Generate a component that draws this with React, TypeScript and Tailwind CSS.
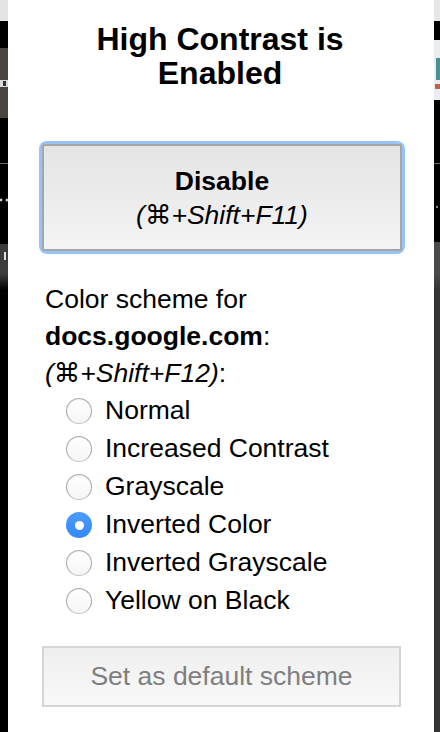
import React from "react";

const radios = [
  { label: "Normal", checked: false },
  { label: "Increased Contrast", checked: false },
  { label: "Grayscale", checked: false },
  { label: "Inverted Color", checked: true },
  { label: "Inverted Grayscale", checked: false },
  { label: "Yellow on Black", checked: false },
];

function LeftStrip() {
  return (
    <svg width="8" height="732" viewBox="0 0 8 732" className="shrink-0 block">
      <defs>
        <linearGradient id="lg1" x1="0" y1="0" x2="0" y2="1">
          <stop offset="0" stopColor="#3c3c3c" />
          <stop offset="1" stopColor="#000000" />
        </linearGradient>
      </defs>
      <rect x="0" y="0" width="8" height="732" fill="#000" />
      <rect x="0" y="0" width="8" height="21" fill="#e4e4e4" />
      <rect x="0" y="48" width="8" height="70" fill="#4a463f" />
      <rect x="0" y="80" width="8" height="7" fill="#d9d9d9" />
      <rect x="3" y="81" width="3" height="5" fill="#333" />
      <rect x="0" y="163" width="8" height="1" fill="#6a6a6a" />
      <circle cx="1" cy="200" r="1.4" fill="#cfcfcf" />
      <circle cx="7" cy="200" r="1.6" fill="#bdbdbd" />
      <rect x="0" y="244" width="8" height="30" fill="#3c3c3c" />
      <rect x="4" y="252" width="2" height="8" fill="#e0e0e0" />
      <rect x="0" y="274" width="8" height="16" fill="url(#lg1)" />
    </svg>
  );
}

function RightStrip() {
  return (
    <svg width="6" height="732" viewBox="0 0 6 732" className="shrink-0 block">
      <defs>
        <linearGradient id="rg1" x1="0" y1="0" x2="0" y2="1">
          <stop offset="0" stopColor="#4a4a4a" />
          <stop offset="1" stopColor="#333333" />
        </linearGradient>
      </defs>
      <rect x="0" y="0" width="6" height="732" fill="#343434" />
      <rect x="0" y="0" width="6" height="242" fill="#000" />
      <rect x="0" y="0" width="6" height="21" fill="#e6e6e6" />
      <rect x="0" y="40" width="6" height="60" fill="#e9edf0" />
      <rect x="2" y="58" width="4" height="22" fill="#4b8f96" />
      <rect x="1" y="84" width="5" height="5" fill="#c0643a" />
      <rect x="0" y="163" width="6" height="1" fill="#6a6a6a" />
      <rect x="2" y="206" width="2" height="2" fill="#888" />
      <rect x="0" y="242" width="6" height="32" fill="#4a4a4a" />
      <rect x="0" y="274" width="6" height="16" fill="url(#rg1)" />
    </svg>
  );
}

function Radio({ checked }: { checked: boolean }) {
  if (checked) {
    return (
      <span className="w-[26px] h-[26px] rounded-full bg-gradient-to-b from-[#4c9cf9] to-[#3288f5] flex items-center justify-center shrink-0">
        <span className="w-[9px] h-[9px] rounded-full bg-white" />
      </span>
    );
  }
  return (
    <span className="w-[26px] h-[26px] rounded-full border border-[#a9a9a9] border-b-[#c4c4c4] bg-gradient-to-b from-white to-[#f6f6f6] shadow-[inset_0_1px_1px_rgba(0,0,0,0.06)] shrink-0" />
  );
}

export default function App() {
  return (
    <div
      className="flex w-[440px] h-[732px] bg-black overflow-hidden"
      style={{ fontFamily: '"Liberation Sans", Arial, "DejaVu Sans", sans-serif' }}
    >
      <LeftStrip />
      <div className="w-[426px] h-[732px] bg-white flex flex-col pl-[34px] pr-[32px] pt-[22px] text-black">
        <h1 className="text-center font-bold text-[32px] leading-[34px] pr-[4px]">
          High Contrast is
          <br />
          Enabled
        </h1>

        <div className="mt-[54px] rounded-[5px] shadow-[0_0_0_3px_#98c3f7]">
          <button className="w-[360px] h-[107px] border-2 border-[#a6a6a6] rounded-[2px] bg-gradient-to-b from-[#e4e4e4] to-[#f4f4f4] flex flex-col items-center justify-center text-[26.5px] leading-[34px]">
            <span className="font-bold">Disable</span>
            <span className="italic">(⌘+Shift+F11)</span>
          </button>
        </div>

        <div className="mt-[30px] ml-[3px] text-[26.5px] leading-[37px]">
          <div>Color scheme for</div>
          <div>
            <span className="font-bold">docs.google.com</span>:
          </div>
          <div>
            <span className="italic">(⌘+Shift+F12)</span>:
          </div>
        </div>

        <div className="flex flex-col pl-[24px]">
          {radios.map((r) => (
            <label key={r.label} className="h-[38px] flex items-center gap-[13px] text-[26.5px]">
              <Radio checked={r.checked} />
              <span>{r.label}</span>
            </label>
          ))}
        </div>

        <button className="mt-[26px] w-[359px] h-[61px] border-2 border-[#d5d5d5] bg-gradient-to-b from-[#efefef] to-[#f9f9f9] text-[26.5px] text-[#7f7f7f] flex items-center justify-center">
          Set as default scheme
        </button>
      </div>
      <RightStrip />
    </div>
  );
}
